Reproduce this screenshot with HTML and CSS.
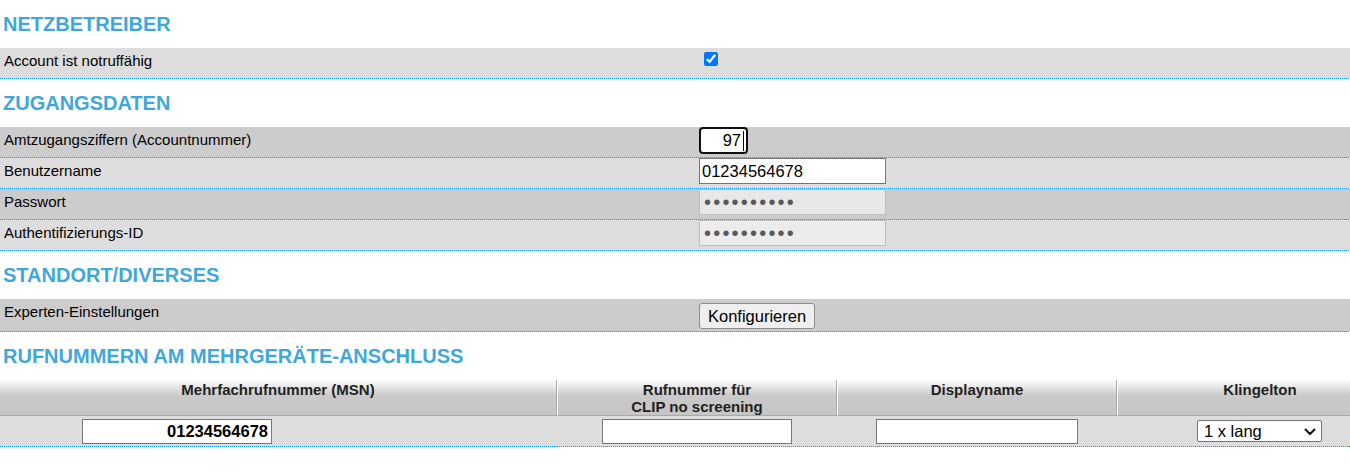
FILE: index.html
```
<!DOCTYPE html>
<html lang="de">
<head>
<meta charset="utf-8">
<title>Telefonie</title>
<link rel="stylesheet" href="styles.css">
</head>
<body>
<div class="page">
  <h2 class="sec-title">NETZBETREIBER</h2>
  <div class="row light">
    <div class="label">Account ist notruffähig</div>
    <div class="value"><input type="checkbox" class="chk" checked></div>
  </div>

  <h2 class="sec-title">ZUGANGSDATEN</h2>
  <div class="row dark">
    <div class="label">Amtzugangsziffern (Accountnummer)</div>
    <div class="value">
      <span class="focus-wrap"><input type="text" class="inp inp-acc" value="97"><span class="caret"></span></span>
    </div>
  </div>
  <div class="row light">
    <div class="label">Benutzername</div>
    <div class="value"><input type="text" class="inp inp-wide" value="01234564678"></div>
  </div>
  <div class="row dark">
    <div class="label">Passwort</div>
    <div class="value"><input type="password" class="inp inp-wide inp-pw" value="secretpass" readonly></div>
  </div>
  <div class="row light">
    <div class="label">Authentifizierungs-ID</div>
    <div class="value"><input type="password" class="inp inp-wide inp-pw inp-pw2" value="secretpass" readonly></div>
  </div>

  <h2 class="sec-title">STANDORT/DIVERSES</h2>
  <div class="row dark row-btn">
    <div class="label">Experten-Einstellungen</div>
    <div class="value"><button type="button" class="btn">Konfigurieren</button></div>
  </div>

  <h2 class="sec-title">RUFNUMMERN AM MEHRGERÄTE-ANSCHLUSS</h2>
  <table class="msn-table">
    <colgroup>
      <col class="c1"><col class="c2"><col class="c3"><col class="c4">
    </colgroup>
    <thead>
      <tr>
        <th class="th-first">Mehrfachrufnummer (MSN)</th>
        <th>Rufnummer für<br>CLIP no screening</th>
        <th>Displayname</th>
        <th class="th-last">Klingelton</th>
      </tr>
    </thead>
    <tbody>
      <tr>
        <td class="td-msn"><input type="text" class="inp inp-msn" value="01234564678"></td>
        <td class="td-center"><input type="text" class="inp inp-clip" value=""></td>
        <td class="td-center"><input type="text" class="inp inp-disp" value=""></td>
        <td class="td-ring">
          <span class="sel-wrap">
            <select class="sel">
              <option selected>1 x lang</option>
              <option>2 x kurz</option>
              <option>3 x kurz</option>
            </select>
            <svg class="sel-arrow" width="12" height="8" viewBox="0 0 12 8" aria-hidden="true">
              <path d="M1.5 1.5 L6 6 L10.5 1.5" fill="none" stroke="#111" stroke-width="2" stroke-linecap="round" stroke-linejoin="round"/>
            </svg>
          </span>
        </td>
      </tr>
    </tbody>
  </table>
</div>
</body>
</html>
```

FILE: styles.css
```
html, body {
  margin: 0;
  padding: 0;
  background: #ffffff;
}

body {
  font-family: "Liberation Sans", Arial, sans-serif;
  font-size: 15px;
  color: #000;
}

.page {
  width: 1350px;
}

.sec-title {
  margin: 0;
  height: 48px;
  line-height: 48px;
  padding-left: 3px;
  font-size: 20px;
  font-weight: bold;
  color: #40a8d9;
}

.row {
  display: grid;
  grid-template-columns: 699px 1fr;
  height: 31px;
  box-sizing: border-box;
  padding-bottom: 1px;
  background-repeat: no-repeat;
  background-position: left bottom;
  background-size: 100% 1px;
  background-image: repeating-linear-gradient(to right, #0a9bff 0, #0a9bff 1px, transparent 1px, transparent 2px);
}

.row.light { background-color: #dddddd; }
.row.dark { background-color: #cccccc; }

.row-btn { height: 33px; }

.label {
  padding: 4px 0 0 4px;
  line-height: normal;
}

.value {
  display: flex;
  align-items: flex-start;
}

.chk {
  margin: 4px 0 0 5px;
  width: 14px;
  height: 14px;
}

.inp {
  font-family: "Liberation Sans", Arial, sans-serif;
  font-size: 16.5px;
  color: #000;
  box-sizing: border-box;
  height: 26px;
  margin: 0;
  padding: 1px 2px;
  border: 1px solid #767676;
  border-radius: 0;
  background: #fff;
  outline: none;
}

.focus-wrap {
  position: relative;
  display: inline-block;
}

.inp-acc {
  width: 49px;
  height: 27px;
  border: 2px solid #101010;
  border-radius: 4px;
  text-align: right;
  padding: 0 5px 0 2px;
  box-shadow: inset 0 0 0 1px #ffffff;
}

.caret {
  position: absolute;
  left: 44px;
  top: 4px;
  width: 1px;
  height: 20px;
  background: #000;
}

.inp-wide {
  width: 187px;
}

.inp-pw {
  background: #e8e8e8;
  border-color: #bdbdbd;
  color: #585858;
  font-size: 20px;
  letter-spacing: 2.2px;
  padding: 0 0 0 4px;
}

.inp-pw2 {
  background: #ececec;
}

.btn {
  margin-top: 4px;
  font-family: "Liberation Sans", Arial, sans-serif;
  font-size: 16.5px;
  color: #000;
  height: 26px;
  padding: 0 8px;
  background: #efefef;
  border: 1px solid #8f8f8f;
  border-radius: 3px;
}

.msn-table {
  width: 1350px;
  table-layout: fixed;
  border-collapse: separate;
  border-spacing: 0;
}

.msn-table col.c1 { width: 557px; }
.msn-table col.c2 { width: 280px; }
.msn-table col.c3 { width: 280px; }
.msn-table col.c4 { width: 233px; }

.msn-table th {
  height: 34px;
  padding: 1px 0 0 0;
  vertical-align: top;
  font-size: 15px;
  font-weight: bold;
  color: #222;
  line-height: 17px;
  background: linear-gradient(to bottom, #fdfdfd 0%, #c9c9c9 45%, #c6c6c6 100%);
  border-bottom: 1px solid #a9a9a9;
  border-left: 1px solid #ffffff;
  border-right: 1px solid #ababab;
}

.msn-table th.th-first { border-left: none; }
.msn-table th.th-last { border-right: none; padding-left: 52px; }

.msn-table td {
  height: 30px;
  padding: 0 0 1px 0;
  vertical-align: middle;
  background-color: #dddddd;
  background-repeat: no-repeat;
  background-position: left bottom;
  background-size: 100% 1px;
  background-image: repeating-linear-gradient(to right, #0a9bff 0, #0a9bff 1px, transparent 1px, transparent 2px);
}

.td-msn { padding-left: 82px !important; }
.td-center { text-align: center; }
.td-ring { text-align: center; padding-left: 52px !important; }

.inp-msn {
  width: 190px;
  height: 25px;
  font-weight: bold;
  text-align: right;
  padding-right: 3px;
}

.inp-clip {
  width: 190px;
  height: 25px;
}

.inp-disp {
  width: 202px;
  height: 25px;
}

.sel-wrap {
  position: relative;
  display: inline-block;
  vertical-align: middle;
}

.sel {
  -webkit-appearance: none;
  appearance: none;
  display: block;
  font-family: "Liberation Sans", Arial, sans-serif;
  font-size: 16.5px;
  color: #000;
  width: 125px;
  height: 22px;
  margin: 0;
  padding: 0 0 0 6px;
  border: 1px solid #767676;
  border-radius: 2px;
  background-color: #fff;
}

.sel-arrow {
  position: absolute;
  right: 6px;
  top: 8px;
  pointer-events: none;
}
```
